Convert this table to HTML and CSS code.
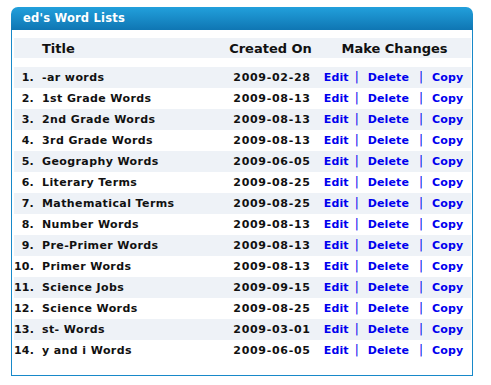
FILE: index.html
```html
<!DOCTYPE html>
<html>
<head>
<meta charset="utf-8">
<link rel="stylesheet" href="styles.css">
</head>
<body>
<div class="panel">
  <div class="panel-head">ed's Word Lists</div>
  <div class="panel-body">
    <table class="lists">
      <colgroup>
        <col class="c-num"><col class="c-title"><col class="c-date"><col class="c-act">
      </colgroup>
      <thead>
        <tr><th></th><th class="th-title">Title</th><th class="th-date">Created On</th><th>Make Changes</th></tr>
      </thead>
      <tbody>
        <tr><td class="num">1.</td><td>-ar words</td><td class="date">2009-02-28</td><td class="act"><a href="#">Edit</a><span class="sep1">|</span><a href="#">Delete</a><span class="sep2">|</span><a href="#">Copy</a></td></tr>
        <tr><td class="num">2.</td><td>1st Grade Words</td><td class="date">2009-08-13</td><td class="act"><a href="#">Edit</a><span class="sep1">|</span><a href="#">Delete</a><span class="sep2">|</span><a href="#">Copy</a></td></tr>
        <tr><td class="num">3.</td><td>2nd Grade Words</td><td class="date">2009-08-13</td><td class="act"><a href="#">Edit</a><span class="sep1">|</span><a href="#">Delete</a><span class="sep2">|</span><a href="#">Copy</a></td></tr>
        <tr><td class="num">4.</td><td>3rd Grade Words</td><td class="date">2009-08-13</td><td class="act"><a href="#">Edit</a><span class="sep1">|</span><a href="#">Delete</a><span class="sep2">|</span><a href="#">Copy</a></td></tr>
        <tr><td class="num">5.</td><td>Geography Words</td><td class="date">2009-06-05</td><td class="act"><a href="#">Edit</a><span class="sep1">|</span><a href="#">Delete</a><span class="sep2">|</span><a href="#">Copy</a></td></tr>
        <tr><td class="num">6.</td><td>Literary Terms</td><td class="date">2009-08-25</td><td class="act"><a href="#">Edit</a><span class="sep1">|</span><a href="#">Delete</a><span class="sep2">|</span><a href="#">Copy</a></td></tr>
        <tr><td class="num">7.</td><td>Mathematical Terms</td><td class="date">2009-08-25</td><td class="act"><a href="#">Edit</a><span class="sep1">|</span><a href="#">Delete</a><span class="sep2">|</span><a href="#">Copy</a></td></tr>
        <tr><td class="num">8.</td><td>Number Words</td><td class="date">2009-08-13</td><td class="act"><a href="#">Edit</a><span class="sep1">|</span><a href="#">Delete</a><span class="sep2">|</span><a href="#">Copy</a></td></tr>
        <tr><td class="num">9.</td><td>Pre-Primer Words</td><td class="date">2009-08-13</td><td class="act"><a href="#">Edit</a><span class="sep1">|</span><a href="#">Delete</a><span class="sep2">|</span><a href="#">Copy</a></td></tr>
        <tr><td class="num">10.</td><td>Primer Words</td><td class="date">2009-08-13</td><td class="act"><a href="#">Edit</a><span class="sep1">|</span><a href="#">Delete</a><span class="sep2">|</span><a href="#">Copy</a></td></tr>
        <tr><td class="num">11.</td><td>Science Jobs</td><td class="date">2009-09-15</td><td class="act"><a href="#">Edit</a><span class="sep1">|</span><a href="#">Delete</a><span class="sep2">|</span><a href="#">Copy</a></td></tr>
        <tr><td class="num">12.</td><td>Science Words</td><td class="date">2009-08-25</td><td class="act"><a href="#">Edit</a><span class="sep1">|</span><a href="#">Delete</a><span class="sep2">|</span><a href="#">Copy</a></td></tr>
        <tr><td class="num">13.</td><td>st- Words</td><td class="date">2009-03-01</td><td class="act"><a href="#">Edit</a><span class="sep1">|</span><a href="#">Delete</a><span class="sep2">|</span><a href="#">Copy</a></td></tr>
        <tr><td class="num">14.</td><td>y and i Words</td><td class="date">2009-06-05</td><td class="act"><a href="#">Edit</a><span class="sep1">|</span><a href="#">Delete</a><span class="sep2">|</span><a href="#">Copy</a></td></tr>
      </tbody>
    </table>
  </div>
</div>
</body>
</html>
```
FILE: styles.css
```css
html, body {
  margin: 0;
  padding: 0;
  background: #ffffff;
}
body {
  padding: 7px 0 0 11px;
  font-family: "DejaVu Sans", Verdana, sans-serif;
  color: #000;
}
.panel {
  width: 462px;
}
.panel-head {
  height: 23px;
  box-sizing: border-box;
  padding: 4px 0 0 12px;
  background: linear-gradient(#22a0dc, #0f76b3);
  border-radius: 7px 7px 0 0;
  color: #fff;
  font-weight: bold;
  font-size: 11.5px;
  line-height: 15px;
  letter-spacing: 0.2px;
}
.panel-body {
  border: 1px solid #1889c9;
  border-top: 0;
  padding: 8px 1px 14px 2px;
}
.lists {
  width: 457px;
  border-collapse: collapse;
  table-layout: fixed;
  font-size: 11px;
  font-weight: bold;
}
.c-num { width: 26px; }
.c-title { width: 186px; }
.c-date { width: 92px; }
.c-act { width: 153px; }
.lists thead th {
  height: 20px;
  padding: 0;
  background: #eef2f7;
  font-size: 13px;
  font-weight: bold;
  text-align: center;
  color: #111;
}
.lists thead th.th-title {
  text-align: left;
  padding-left: 2px;
}
.lists thead th.th-date {
  padding-right: 3px;
}
.lists thead tr {
  border-bottom: 9px solid #fff;
}
.lists tbody td {
  height: 21px;
  padding: 0;
  line-height: 13px;
  color: #111;
  letter-spacing: 0.4px;
}
.lists tbody tr:nth-child(odd) td {
  background: #eef2f7;
}
.lists td.num {
  text-align: right;
  padding-right: 6px;
  letter-spacing: 0.2px;
}
.lists tbody td:nth-child(2) {
  padding-left: 2px;
}
.lists td.date {
  text-align: center;
  letter-spacing: 0.7px;
}
.lists td.act {
  text-align: center;
  color: #0000ee;
  letter-spacing: 0.1px;
  padding-right: 2px;
}
.act a {
  color: #0000ee;
  text-decoration: none;
}
.act span {
  color: #0000ee;
  font-weight: normal;
  font-size: 12px;
}
.sep1 {
  margin: 0 9px 0 6px;
}
.sep2 {
  margin: 0 9px 0 10px;
}
```
